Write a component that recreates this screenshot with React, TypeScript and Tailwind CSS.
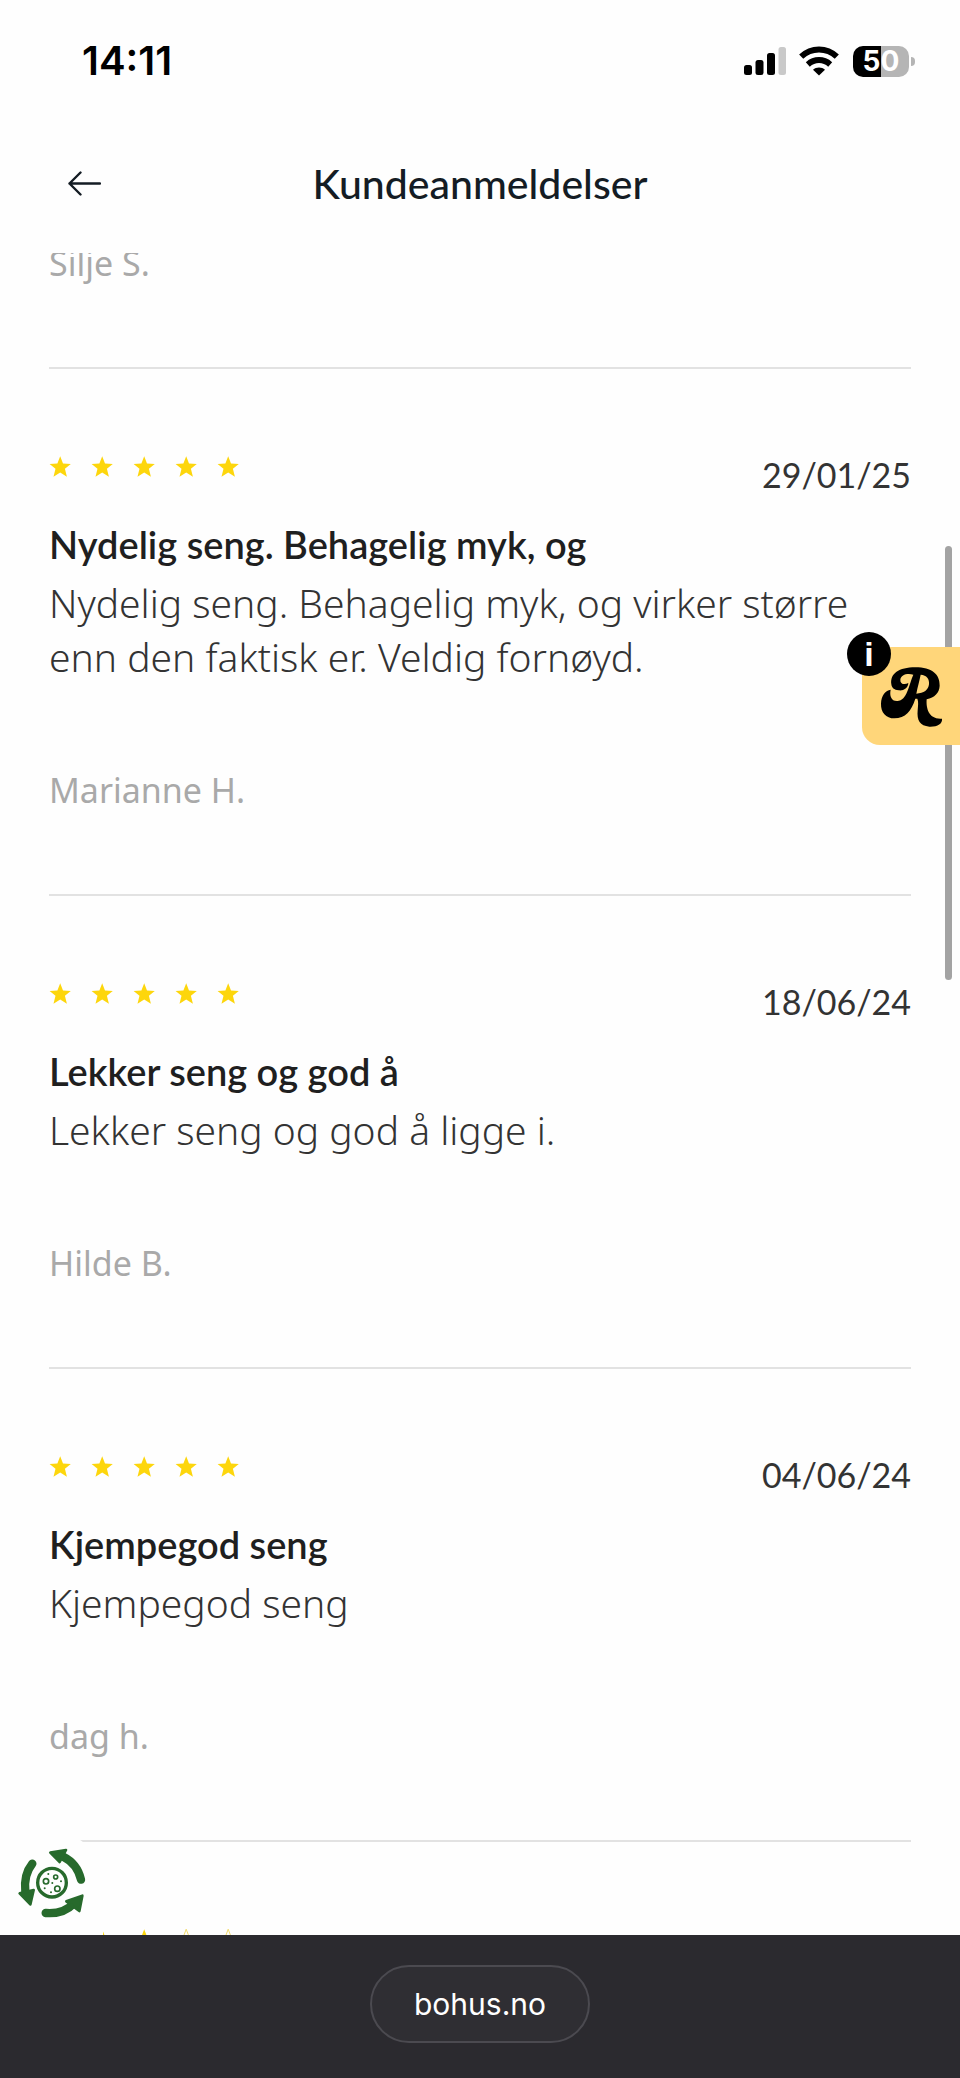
type Review = {
  id: number;
  rating: number;
  date: string;
  title: string;
  text: string;
  author: string;
};

const reviews: Review[] = [
  {
    id: 1,
    rating: 5,
    date: '29/01/25',
    title: 'Nydelig seng. Behagelig myk, og',
    text: 'Nydelig seng. Behagelig myk, og virker større enn den faktisk er. Veldig fornøyd.',
    author: 'Marianne H.',
  },
  {
    id: 2,
    rating: 5,
    date: '18/06/24',
    title: 'Lekker seng og god å',
    text: 'Lekker seng og god å ligge i.',
    author: 'Hilde B.',
  },
  {
    id: 3,
    rating: 5,
    date: '04/06/24',
    title: 'Kjempegod seng',
    text: 'Kjempegod seng',
    author: 'dag h.',
  },
];

function Star({ filled }: { filled: boolean }) {
  return (
    <svg viewBox="0 0 24 24" className="size-6" aria-hidden="true">
      <path
        d="M11.2 1.2 14 8.6 21.8 9 15.9 13.8 17.9 21.8 11.2 17.4 4.5 21.8 6.5 13.8 .6 9 8.4 8.6Z"
        fill={filled ? '#fdd60c' : 'none'}
        stroke={filled ? 'none' : '#f3dc6b'}
        strokeWidth="1"
      />
    </svg>
  );
}

function Stars({ rating }: { rating: number }) {
  return (
    <div className="flex gap-[18px]" role="img" aria-label={`${rating} av 5`}>
      {[1, 2, 3, 4, 5].map((n) => (
        <Star key={n} filled={n <= rating} />
      ))}
    </div>
  );
}

function Author({ name }: { name: string }) {
  return (
    <p className="font-['Noto_Sans',sans-serif] text-[34px] leading-[46px] text-[#a9a9a9]">
      {name}
    </p>
  );
}

function ReviewHead({ rating, date }: { rating: number; date: string }) {
  return (
    <div className="flex items-start justify-between">
      <Stars rating={rating} />
      <time className="text-[34px] leading-10 text-[#333]">{date}</time>
    </div>
  );
}

function ReviewCard({ review }: { review: Review }) {
  return (
    <article className="border-b-2 border-[#e2e2e2] pt-[86px] pb-[81px]">
      <ReviewHead rating={review.rating} date={review.date} />
      <h2 className="mt-[25px] text-[38px] leading-[48px] font-semibold text-[#1f1f1f]">
        {review.title}
      </h2>
      <p className="mt-2 mb-[83px] font-['Noto_Sans',sans-serif] text-[39px] leading-[54px] font-light text-[#333]">
        {review.text}
      </p>
      <Author name={review.author} />
    </article>
  );
}

function StatusBar() {
  return (
    <div className="flex h-[122px] shrink-0 items-center justify-between pr-[45px] pl-[82px] font-['Inter',sans-serif]">
      <span className="text-[40px] leading-none font-semibold text-black">14:11</span>
      <div className="flex items-center">
        {/* Signal */}
        <svg viewBox="0 0 42 30" className="h-[30px] w-[42px]" aria-hidden="true">
          <rect x="0" y="19" width="8" height="10" rx="2.5" />
          <rect x="11.5" y="14" width="8" height="15" rx="2.5" />
          <rect x="23" y="7" width="8" height="22" rx="2.5" />
          <rect x="34.5" y="1" width="7.5" height="28" rx="2.5" fill="#c9c9c9" />
        </svg>
        {/* Wifi */}
        <svg viewBox="0 0 40 30" className="ml-[13px] h-[30px] w-10" aria-hidden="true">
          <g fill="none" stroke="#000" strokeWidth="6">
            <path d="M2.2 10.6C12.4 1 27.6 1 37.8 10.6" />
            <path d="M8.8 18.4C15.4 12.6 24.6 12.6 31.2 18.4" />
          </g>
          <path d="M20 29.6 14 23.8C17.2 20.8 22.8 20.8 26 23.8Z" />
        </svg>
        {/* Battery */}
        <div className="ml-[14px] flex h-[31px] w-14 items-center justify-center rounded-[10px] bg-[linear-gradient(to_right,#000_50%,#b5b5b5_50%)] text-[28px] leading-none font-bold text-white">
          50
        </div>
        <span className="ml-[2px] h-[9px] w-1 rounded-r-full bg-[#b5b5b5]" />
      </div>
    </div>
  );
}

function Header() {
  return (
    <header className="grid h-[131px] shrink-0 grid-cols-[34px_1fr_34px] items-center px-[67px] pb-2 text-[#141c24]">
      <button type="button" aria-label="Tilbake">
        <svg
          viewBox="0 0 34 26"
          className="h-[26px] w-[34px]"
          fill="none"
          stroke="currentColor"
          strokeWidth="2.4"
          strokeLinecap="round"
          strokeLinejoin="round"
        >
          <path d="M33 12.5H2.5M13.5 1.5 2.5 12.5 13.5 23.5" />
        </svg>
      </button>
      <h1 className="text-center text-[41px] leading-[48px] font-medium">Kundeanmeldelser</h1>
    </header>
  );
}

function RewardWidget() {
  return (
    <div className="absolute top-[647px] right-0 size-[98px] rounded-bl-[18px] bg-[#ffd67a]">
      <button type="button" aria-label="Åpne" className="block size-full">
        <svg viewBox="66 66 294 294" className="size-full" aria-hidden="true">
          <path d="M154 178C150 146 176 127 226 127C276 127 300 148 299 182C298 204 284 217 260 223C258 250 266 284 306 281C308 296 292 306 268 305C240 303 230 286 233 256C234 242 236 230 232 221L226 221C214 258 196 280 163 280C138 280 122 262 123 236C124 210 137 196 152 194C148 212 154 229 172 228C202 226 206 180 220 149C200 144 183 150 181 164C180 178 194 180 205 174C204 190 190 198 176 196C162 195 155 188 154 178Z" />
          <path
            d="M242 149C260 150 269 162 267 178C265 195 252 205 229 206C233 186 238 168 242 149Z"
            fill="#ffd67a"
          />
        </svg>
      </button>
      <span className="absolute -top-[15px] -left-[15px] flex size-11 items-center justify-center rounded-full bg-black font-['Liberation_Sans',sans-serif] text-[34px] leading-none font-bold text-white">
        i
      </span>
    </div>
  );
}

function CookieButton() {
  return (
    <button
      type="button"
      aria-label="Informasjonskapsler"
      className="absolute bottom-0 left-0 h-[103px] w-[103px] rounded-tr-[50px] bg-[#fefefe]"
    >
      <svg viewBox="-30 -24 309 309" className="size-full" aria-hidden="true">
        <g fill="none" stroke="#276a2c" strokeWidth="25" strokeLinecap="round">
          <path d="M213 119C206 88 188 64 160 50" />
          <path d="M67 71C50 92 42 120 46 156" />
          <path d="M107 219C142 222 170 213 192 190" />
        </g>
        <g fill="#276a2c" stroke="#276a2c" strokeWidth="8" strokeLinejoin="round">
          <path d="M121 38 168 30 149 66Z" />
          <path d="M29 160 71 150 61 193Z" />
          <path d="M217 167 169 184 208 213Z" />
        </g>
        <circle cx="126" cy="128" r="43" fill="none" stroke="#276a2c" strokeWidth="10" />
        <g fill="none" stroke="#276a2c" strokeWidth="5">
          <circle cx="108" cy="124" r="8" />
          <circle cx="137" cy="111" r="6" />
          <circle cx="142" cy="146" r="8" />
        </g>
        <g fill="#276a2c">
          <circle cx="115" cy="102" r="3" />
          <circle cx="127" cy="129" r="3" />
          <circle cx="153" cy="124" r="3" />
          <circle cx="104" cy="145" r="3" />
          <circle cx="123" cy="157" r="3" />
        </g>
      </svg>
    </button>
  );
}

export default function App() {
  return (
    <div className="relative flex h-screen flex-col overflow-hidden bg-[#fefefe] font-['Lato',sans-serif]">
      <StatusBar />
      <Header />

      <main className="relative min-h-0 flex-1 overflow-hidden px-[49px]">
        {/* Scrolled part way into the list */}
        <div className="-mt-[13px]">
          <article className="border-b-2 border-[#e2e2e2] pb-[81px]">
            <Author name="Silje S." />
          </article>
          {reviews.map((review) => (
            <ReviewCard key={review.id} review={review} />
          ))}
          <article className="pt-[86px]">
            <ReviewHead rating={3} date="02/06/24" />
          </article>
        </div>
        <CookieButton />
      </main>

      {/* Scroll thumb */}
      <div className="absolute top-[546px] right-2 h-[434px] w-[7px] rounded-full bg-[#a3a3a3]" />
      <RewardWidget />

      <footer className="flex h-[143px] shrink-0 items-start justify-center bg-[#2b2a2f] pt-[30px]">
        <button
          type="button"
          className="h-[78px] rounded-full border-2 border-[#4b4a50] bg-[#2f2e33] px-[42px] font-['Inter',sans-serif] text-[30px] text-white"
        >
          bohus.no
        </button>
      </footer>
    </div>
  );
}
